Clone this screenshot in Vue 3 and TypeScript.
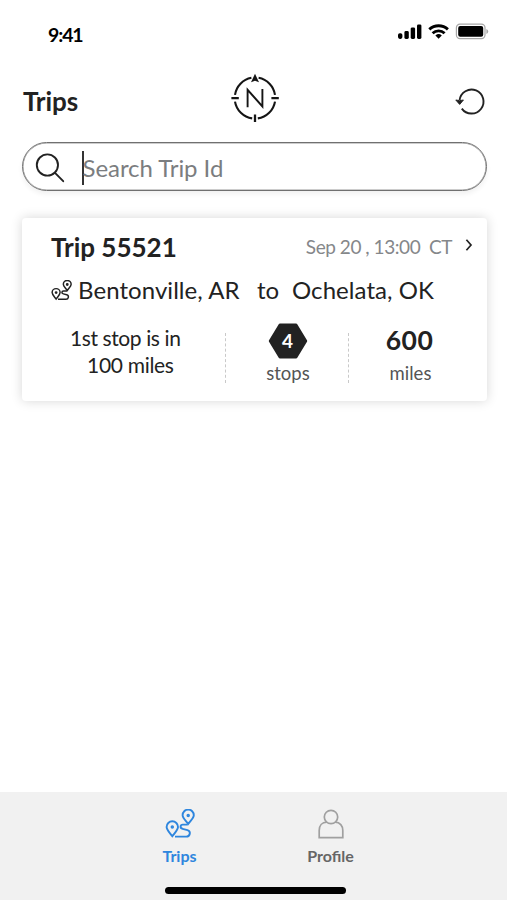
<script setup lang="ts">
import { ref } from 'vue'

interface Trip {
  id: string
  date: string
  time: string
  zone: string
  from: string
  to: string
  nextStopMiles: number
  stops: number
  miles: number
}

const trips = ref<Trip[]>([
  {
    id: '55521',
    date: 'Sep 20',
    time: '13:00',
    zone: 'CT',
    from: 'Bentonville, AR',
    to: 'Ochelata, OK',
    nextStopMiles: 100,
    stops: 4,
    miles: 600,
  },
])
</script>

<template>
  <div class="screen">
    <div class="status">
      <span class="clock">9:41</span>
      <svg class="status-icons" width="92" height="20" viewBox="0 0 92 20">
        <g>
          <rect x="0" y="11.3" width="4.4" height="5.6" rx="1.8" />
          <rect x="6.4" y="9" width="4.4" height="7.9" rx="1.4" />
          <rect x="12.7" y="5.4" width="4.4" height="11.5" rx="1.4" />
          <rect x="19" y="2.4" width="4.4" height="14.5" rx="1.4" />
        </g>
        <g fill="none" stroke="#000" stroke-width="2.9">
          <path d="M31.3 7.4a13.6 13.6 0 0 1 18.6 0" />
          <path d="M34.6 11.2a8.8 8.8 0 0 1 12 0" />
        </g>
        <path d="M37.4 13.4a5 5 0 0 1 6.4 0l-3.2 3.4z" />
        <rect x="58.4" y="2.1" width="28.6" height="14.6" rx="3.6" fill="none" stroke="#a6a6a6" stroke-width="1.2" />
        <rect x="60.2" y="4.1" width="25" height="10.7" rx="2" />
        <path d="M88.4 6.9q1.8 .8 1.8 2.5t-1.8 2.5z" fill="#a6a6a6" />
      </svg>
    </div>

    <header class="header">
      <h1 class="title">Trips</h1>
      <svg class="compass" width="50" height="52" viewBox="0 0 50 52">
        <g fill="none" stroke="#151515" stroke-width="2.1">
          <path d="M28.6 5.8A20.4 20.4 0 0 1 45 22.8M45 29.6A20.4 20.4 0 0 1 27.8 46.4M22.2 46.4A20.4 20.4 0 0 1 5 29.6M5 22.8A20.4 20.4 0 0 1 21.4 5.8" />
          <path d="M1.4 26.2h7.4M41.4 26.2h7.4M25 42.6v7.4" stroke-width="2.3" />
          <path d="M17.6 35.2V17.8l14.8 16.6V17" stroke-width="1.9" />
        </g>
        <path d="M25 1.8l4 8.4-4-1.4-4 1.4z" fill="#151515" />
      </svg>
      <svg class="refresh" width="32" height="32" viewBox="0 0 32 32">
        <path d="M6.8 22.6A12 12 0 1 0 4.6 14.2" fill="none" stroke="#222" stroke-width="1.9" />
        <path d="M.8 14q3.8 1.3 7.6 0L4.7 18.4z" fill="#222" stroke="#222" stroke-width="1" stroke-linejoin="round" />
      </svg>
    </header>

    <div class="search">
      <svg width="32" height="32" viewBox="0 0 32 32" fill="none" stroke="#222" stroke-width="1.9" stroke-linecap="round">
        <circle cx="12.4" cy="13" r="10.6" />
        <path d="M20 20.8l8.2 8.4" />
      </svg>
      <span class="caret"></span>
      <span class="placeholder">Search Trip Id</span>
    </div>

    <article v-for="trip in trips" :key="trip.id" class="card">
      <div class="card-head">
        <h2 class="trip-id">Trip {{ trip.id }}</h2>
        <span class="when">{{ trip.date }} , {{ trip.time }}&nbsp; {{ trip.zone }}</span>
        <svg class="chevron" width="8" height="14" viewBox="0 0 8 14" fill="none" stroke="#222" stroke-width="1.7">
          <path d="M1.4 1.8L6 7l-4.6 5.2" />
        </svg>
      </div>

      <div class="route">
        <svg class="route-icon" width="21" height="21" viewBox="0 0 30 30" fill="none" stroke="#222" stroke-width="2.1">
          <path d="M7.3 27.2C4.3 23.2 1.6 20.7 1.6 18a5.7 5.7 0 0 1 11.4 0c0 2.7-2.7 5.2-5.7 9.2z" />
          <path d="M23.2 15C20.3 11 17.6 8.8 17.6 6.2a5.6 5.6 0 0 1 11.2 0c0 2.6-2.7 4.8-5.6 8.8z" />
          <path d="M22.8 15.6h-5c-2.8 0-3 3.6-.2 4.2l4.9 1.3c3.7 1 2.8 6.5-1.2 6.5H10" />
          <circle cx="7.3" cy="18" r="1" /><circle cx="23.2" cy="6.4" r="1" />
        </svg>
        <span class="from">{{ trip.from }}</span>
        <span class="to">to</span>
        <span class="dest">{{ trip.to }}</span>
      </div>

      <div class="stats">
        <div class="next">
          <span class="next-top">1st stop is in</span>
          <span class="next-miles">{{ trip.nextStopMiles }} miles</span>
        </div>
        <div class="stat divided">
          <div class="hex">
            <svg width="40" height="36" viewBox="0 0 40 36">
              <path d="M12 2h16l9.7 16L28 34H12L2.3 18z" fill="#222" stroke="#222" stroke-width="3" stroke-linejoin="round" />
            </svg>
            <span class="hex-number">{{ trip.stops }}</span>
          </div>
          <span class="label stops-label">stops</span>
        </div>
        <div class="stat divided distance">
          <span class="total">{{ trip.miles }}</span>
          <span class="label miles-label">miles</span>
        </div>
      </div>
    </article>

    <nav class="tabs">
      <div class="tab-row">
        <a class="tab active">
          <svg width="30" height="30" viewBox="0 0 30 30" fill="none" stroke="currentColor" stroke-width="1.9">
            <path d="M7.3 27.2C4.3 23.2 1.6 20.7 1.6 18a5.7 5.7 0 0 1 11.4 0c0 2.7-2.7 5.2-5.7 9.2z" />
            <path d="M23.2 15C20.3 11 17.6 8.8 17.6 6.2a5.6 5.6 0 0 1 11.2 0c0 2.6-2.7 4.8-5.6 8.8z" />
            <path d="M22.8 15.6h-5c-2.8 0-3 3.6-.2 4.2l4.9 1.3c3.7 1 2.8 6.5-1.2 6.5H10" />
            <circle cx="7.3" cy="18" r=".8" /><circle cx="23.2" cy="6.4" r=".8" />
          </svg>
          <span class="tab-trips">Trips</span>
        </a>
        <a class="tab">
          <svg width="30" height="30" viewBox="0 0 30 30" fill="none" stroke="#a0a0a0" stroke-width="1.7">
            <circle cx="15" cy="8" r="6.7" />
            <path d="M10.8 13.2C6 13.2 3.2 16.8 3.2 21.4V28.6h23.6V21.4c0-4.6-2.8-8.2-7.6-8.2" />
          </svg>
          <span class="tab-profile">Profile</span>
        </a>
      </div>
      <div class="home-bar"></div>
    </nav>
  </div>
</template>

<style>
body {
  background: #fff;
}
</style>

<style scoped>
.screen {
  width: 507px;
  height: 900px;
  display: flex;
  flex-direction: column;
  overflow: hidden;
  background: #fff;
  color: #222;
  font-family: Lato, "Open Sans", sans-serif;
  white-space: nowrap;
}
.status {
  height: 66px;
  box-sizing: border-box;
  padding: 22px 17px 0 48px;
  display: flex;
  justify-content: space-between;
  align-items: flex-start;
  color: #000;
}
.clock {
  font-size: 19.5px;
  line-height: 26px;
  font-weight: 700;
  letter-spacing: -1.1px;
}
.header {
  height: 76px;
  box-sizing: border-box;
  padding: 0 21px 0 23px;
  display: grid;
  grid-template-columns: 207px 50px 1fr;
  align-items: start;
}
.title {
  margin: 19px 0 0;
  font-size: 26px;
  line-height: 32px;
  font-weight: 700;
  letter-spacing: -0.1px;
}
.compass {
  margin-top: 6px;
}
.refresh {
  justify-self: end;
  margin: 20px -1px 0 0;
}
.search {
  height: 49px;
  margin: 0 20px 0 22px;
  box-sizing: border-box;
  flex: none;
  display: flex;
  align-items: center;
  padding: 2px 0 0 12px;
  border: 1.5px solid #707070;
  border-radius: 25px;
  box-shadow: inset 0 0 0 0.5px #999, 0 3px 5px rgba(0, 0, 0, 0.06);
}
.caret {
  width: 1.5px;
  height: 34px;
  margin-left: 15px;
  background: #333;
}
.placeholder {
  margin-left: -1px;
  font-size: 24px;
  line-height: 30px;
  letter-spacing: -0.05px;
  color: #7b7d80;
}
.card {
  margin: 27px 20px 0 22px;
  height: 183px;
  flex: none;
  box-sizing: border-box;
  border-radius: 4px;
  box-shadow: 0 0 12px rgba(0, 0, 0, 0.16);
}
.card-head {
  height: 57px;
  padding: 0 14px 0 29px;
  display: flex;
  align-items: center;
}
.trip-id {
  margin: 0 auto 0 0;
  font-size: 26px;
  line-height: 32px;
  font-weight: 700;
}
.when {
  font-size: 19px;
  line-height: 26px;
  letter-spacing: -0.4px;
  word-spacing: -0.2px;
  color: #85878a;
}
.chevron {
  margin: 0 0 3px 13px;
}
.route {
  height: 30px;
  padding-left: 29px;
  display: flex;
  align-items: center;
  font-size: 24px;
  line-height: 30px;
  letter-spacing: 0.06px;
}
.from {
  width: 179px;
  margin-left: 6px;
}
.to {
  width: 35px;
}
.stats {
  display: grid;
  grid-template-columns: 203px 123px 1fr;
  padding-top: 16px;
}
.next {
  display: flex;
  flex-direction: column;
  padding: 3px 0 0 48px;
  font-size: 21px;
  line-height: 27px;
  letter-spacing: -0.4px;
}
.next-miles {
  padding-left: 17px;
  letter-spacing: -0.3px;
}
.stat {
  display: flex;
  flex-direction: column;
  align-items: center;
  position: relative;
}
.divided {
  padding-left: 2px;
}
.divided::before {
  content: "";
  position: absolute;
  left: 0;
  top: 12px;
  height: 50px;
  border-left: 1px dashed #c9c9c9;
}
.distance {
  padding: 0 16px 0 0;
}
.hex {
  width: 40px;
  height: 36px;
  margin-top: 2px;
  display: grid;
  place-items: center;
}
.hex > * {
  grid-area: 1 / 1;
}
.hex-number {
  color: #fff;
  font-size: 19px;
  line-height: 24px;
  font-weight: 700;
}
.label {
  font-size: 18.5px;
  line-height: 24px;
  color: #555;
  margin-top: 2px;
}
.stops-label {
  padding-left: 1px;
}
.total {
  height: 38px;
  font-size: 26.5px;
  line-height: 38px;
  font-weight: 700;
  letter-spacing: 0.4px;
}
.miles-label {
  padding-left: 2px;
}
.tabs {
  margin-top: auto;
  height: 108px;
  box-sizing: border-box;
  padding-top: 17px;
  display: flex;
  flex-direction: column;
  align-items: center;
  background: #f1f1f1;
}
.tab-row {
  width: 302px;
  padding-left: 3px;
  display: grid;
  grid-template-columns: 1fr 1fr;
}
.tab {
  display: flex;
  flex-direction: column;
  align-items: center;
  gap: 7px;
  font-size: 16px;
  line-height: 20px;
  font-weight: 700;
  color: #666;
}
.active {
  color: #2e86de;
}
.home-bar {
  width: 181px;
  height: 7px;
  margin: 21px 0 0 3px;
  border-radius: 4px;
  background: #000;
}
</style>
